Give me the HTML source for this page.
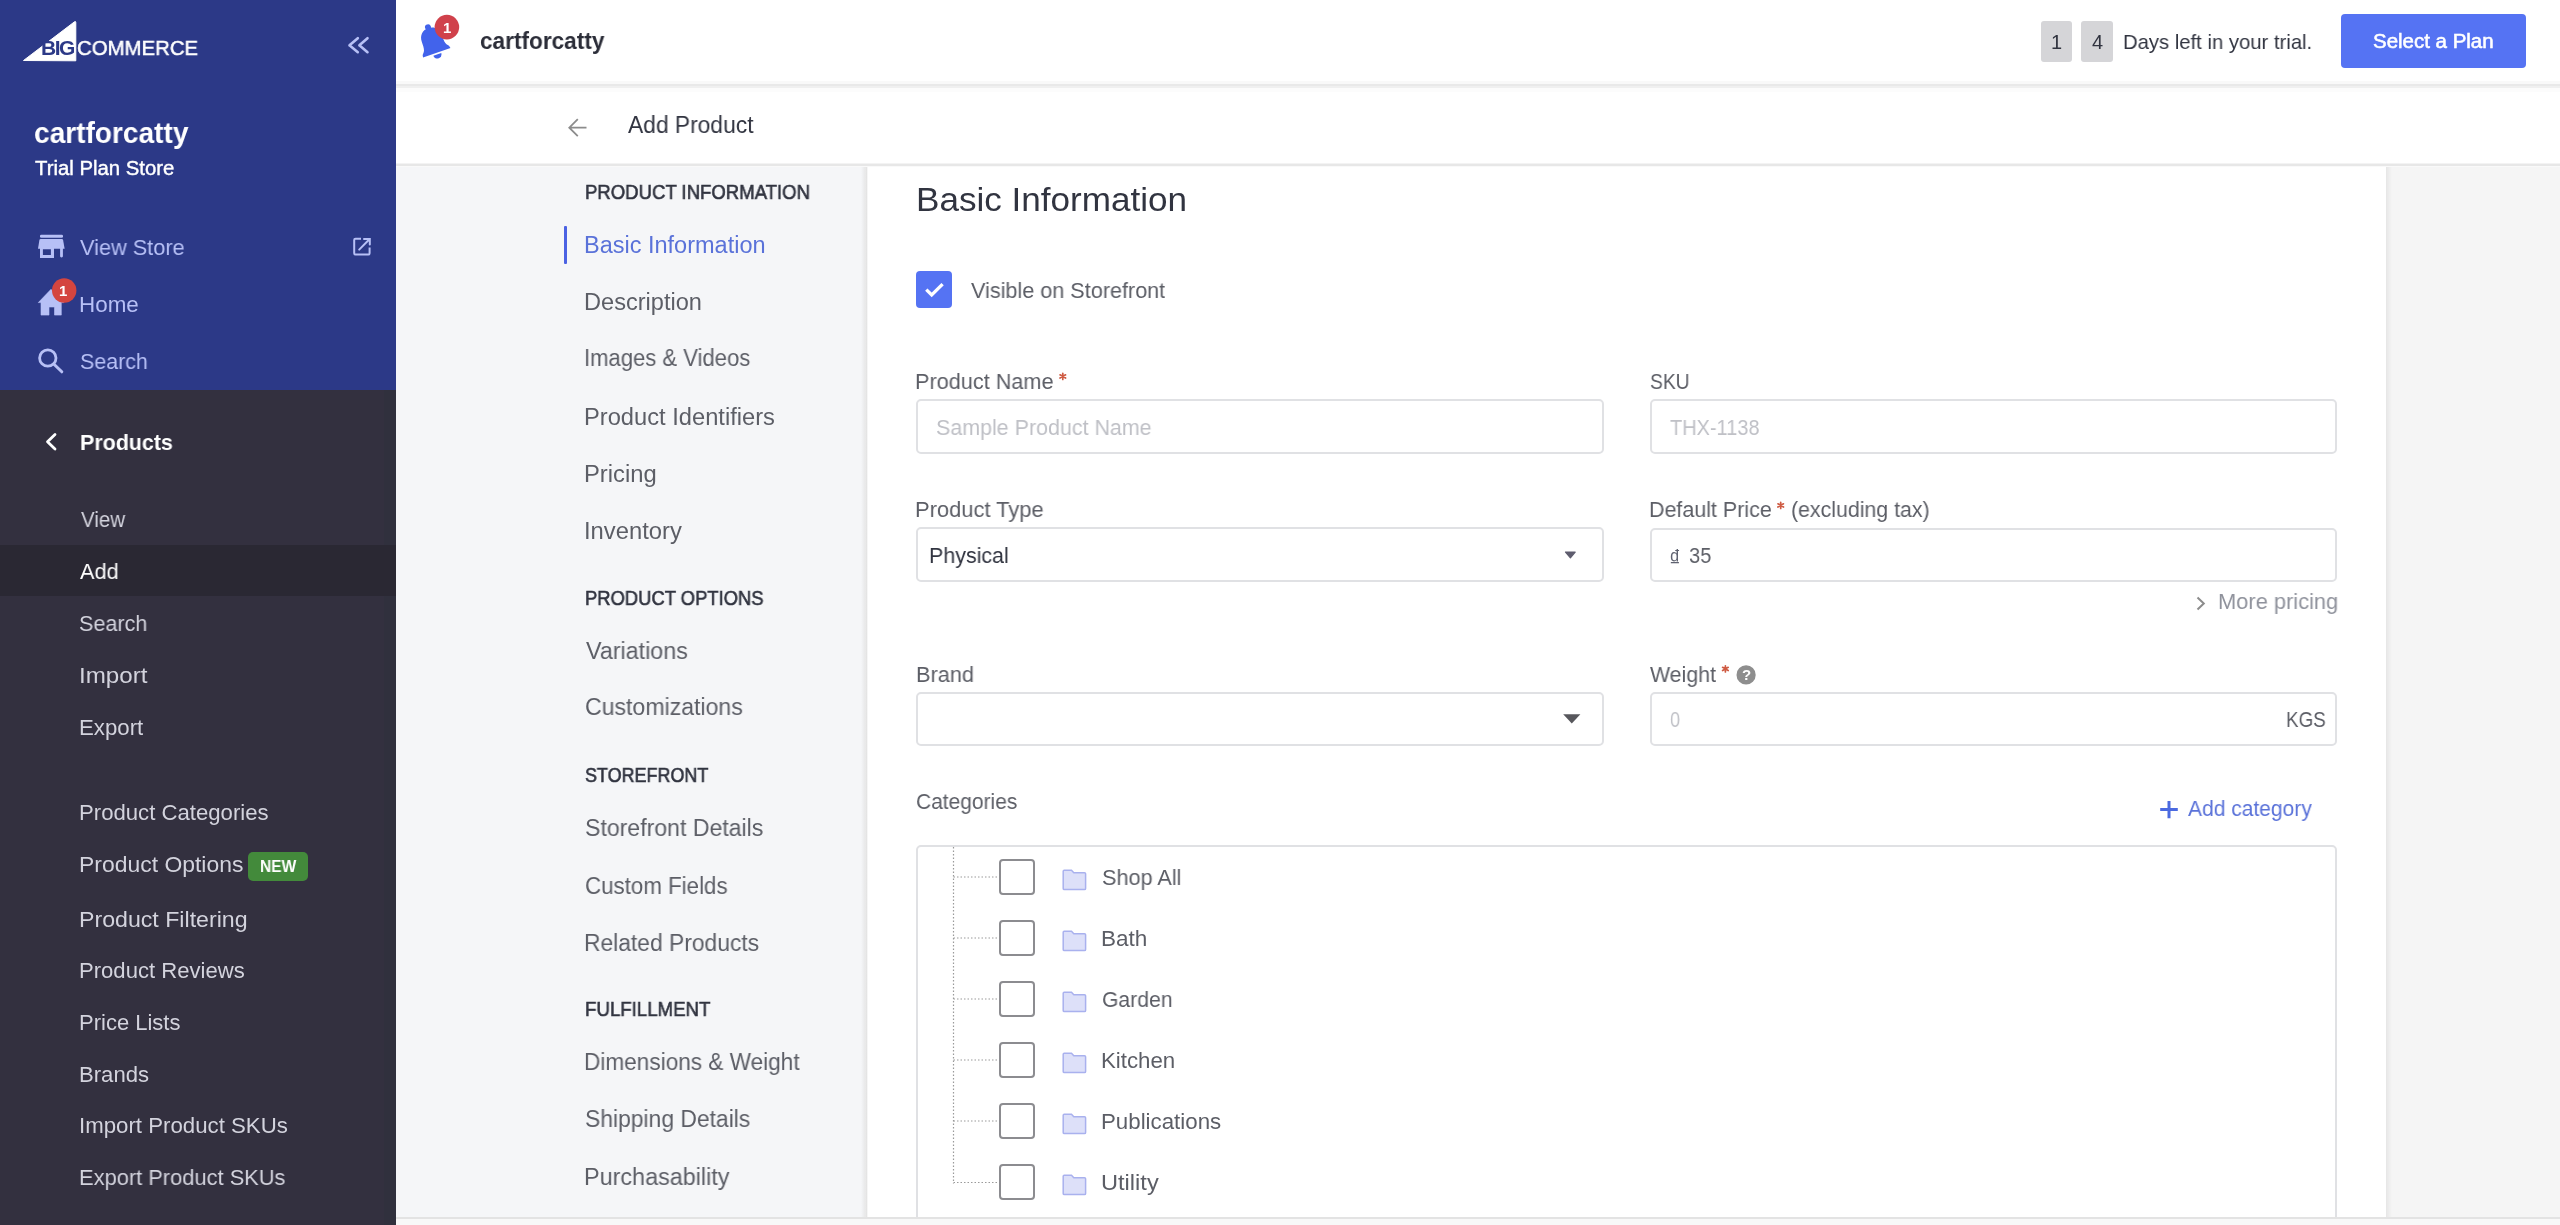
<!DOCTYPE html>
<html><head><meta charset="utf-8"><title>Add Product</title>
<style>
html,body{margin:0;padding:0}
body{width:2560px;height:1225px;overflow:hidden;position:relative;background:#ffffff;font-family:"Liberation Sans",sans-serif}
.a{position:absolute}
.t{position:absolute;white-space:nowrap;transform-origin:0 0;will-change:transform}
.inp{position:absolute;box-sizing:border-box;border:2px solid #e0e1e4;border-radius:5px;background:#fff}
.cb{position:absolute;box-sizing:border-box;width:36px;height:36px;border:2px solid #8c8c90;border-radius:4px;background:#fff}
svg{position:absolute;overflow:visible}
</style></head><body>
<!-- sidebar -->
<div class="a" style="left:0;top:0;width:396px;height:390px;background:#2c3987"></div>
<div class="a" style="left:0;top:390px;width:396px;height:835px;background:#33303f"></div>
<div class="a" style="left:384px;top:390px;width:12px;height:835px;background:#30303d"></div>
<div class="a" style="left:0;top:545px;width:396px;height:51px;background:#2a2833"></div>
<!-- logo -->
<svg style="left:0;top:0" width="396" height="80">
  <path d="M23.5 60.5 L74.5 21.8 Q75.8 21 75.8 22.5 L75.8 60.8 Z" fill="#ffffff" stroke="#ffffff" stroke-width="1" stroke-linejoin="round"/>
  <path d="M349.5 45.3 L357.8 38.2 M349.5 45.3 L357.8 52.2 M359.4 45.3 L367.5 38.2 M359.4 45.3 L367.5 52.2" stroke="#b7c0f6" stroke-width="2.6" stroke-linecap="round" fill="none"/>
</svg>
<!-- sidebar icons -->
<svg style="left:0;top:0" width="396" height="460">
  <!-- store -->
  <rect x="40" y="234.8" width="23" height="3" rx="1.3" fill="#b7c0f6"/>
  <path d="M41.6 239.1 L61.9 239.1 Q62.9 239.1 63.1 240.1 L64.6 248.7 L38 248.7 L39.4 240.1 Q39.6 239.1 40.6 239.1 Z" fill="#b7c0f6"/>
  <path d="M40 248 L54 248 L54 257.9 L40 257.9 Z M42.9 249.2 L42.9 254.9 L50.9 254.9 L50.9 249.2 Z" fill="#b7c0f6" fill-rule="evenodd"/>
  <path d="M60.1 248 L62.9 248 L62.9 256.6 Q61.5 258.6 60.1 256.6 Z" fill="#b7c0f6"/>
  <!-- external link -->
  <path d="M361 238.8 L355.5 238.8 Q354.2 238.8 354.2 240.1 L354.2 253.2 Q354.2 254.5 355.5 254.5 L368.3 254.5 Q369.6 254.5 369.6 253.2 L369.6 247.5" stroke="#b7c0f6" stroke-width="2" fill="none"/>
  <path d="M359.2 249.6 L369.4 239.2 M364 238.9 L369.8 238.9 L369.8 244.6" stroke="#b7c0f6" stroke-width="2" fill="none" stroke-linecap="round"/>
  <!-- home -->
  <path d="M51 289.3 L38.3 302.6 L41 302.6 L41 315.1 L49 315.1 L49 307 L54.5 307 L54.5 315.1 L61.3 315.1 L61.3 302.6 L63.8 302.6 Z" fill="#b7c0f6" stroke="#b7c0f6" stroke-width="0.6" stroke-linejoin="round"/>
  <circle cx="64.2" cy="290.5" r="12.2" fill="#d4453f"/>
  <!-- search -->
  <circle cx="47.8" cy="358" r="8.2" stroke="#b7c0f6" stroke-width="2.8" fill="none"/>
  <path d="M54 364.2 L61.8 371.8" stroke="#b7c0f6" stroke-width="3" stroke-linecap="round"/>
  <!-- products chevron -->
  <path d="M55 434.5 L47.5 441.8 L55 449" stroke="#ffffff" stroke-width="2.8" fill="none" stroke-linecap="round" stroke-linejoin="round"/>
</svg>
<div class="t" style="left:59.2px;top:281px;font-size:15px;line-height:20px;font-weight:bold;color:#fff">1</div>
<!-- NEW badge -->
<div class="a" style="left:248px;top:852px;width:60px;height:29px;background:#438a3b;border-radius:5px"></div>

<!-- header -->
<div class="a" style="left:396px;top:0;width:2164px;height:85px;background:#fff"></div>
<div class="a" style="left:396px;top:81px;width:2164px;height:3px;background:#f9f9f9"></div>
<div class="a" style="left:396px;top:84px;width:2164px;height:2px;background:#e9e9e9"></div>
<div class="a" style="left:396px;top:86px;width:2164px;height:2px;background:#f0f0f0"></div>
<div class="a" style="left:396px;top:88px;width:2164px;height:4px;background:#fcfcfc"></div>
<svg style="left:0;top:0" width="600" height="80">
  <g transform="translate(436.6 52.3) rotate(-19)">
    <path d="M-14.5 0.5 Q-14.5 -2.5 -12 -4.5 C-10.8 -6 -10.6 -9 -10.6 -12 L-10.6 -14.5 C-10.6 -21.5 -6 -25.6 0 -25.6 C6 -25.6 10.6 -21.5 10.6 -14.5 L10.6 -12 C10.6 -9 10.8 -6 12 -4.5 Q14.5 -2.5 14.5 0.5 Z" fill="#4263eb"/>
    <circle cx="0" cy="-26.5" r="3" fill="#4263eb"/>
    <path d="M-4.2 2.2 A4.2 4.2 0 0 0 4.2 2.2 Z" fill="#4263eb"/>
  </g>
  <circle cx="446.9" cy="27.1" r="12.3" fill="#d0414b"/>
</svg>
<div class="t" style="left:442.6px;top:17.5px;font-size:15px;line-height:20px;font-weight:bold;color:#fff">1</div>
<div class="a" style="left:2040.5px;top:21px;width:31px;height:40.5px;background:#d5d5d8;border-radius:3px"></div>
<div class="a" style="left:2081px;top:21px;width:31.5px;height:40.5px;background:#d5d5d8;border-radius:3px"></div>
<div class="a" style="left:2341px;top:14px;width:185px;height:54px;background:#5573f3;border-radius:4px"></div>

<!-- page header -->
<div class="a" style="left:396px;top:92px;width:2164px;height:72px;background:#fff"></div>
<div class="a" style="left:396px;top:163px;width:2164px;height:1px;background:#f3f3f3"></div>
<div class="a" style="left:396px;top:164px;width:2164px;height:2px;background:#e7e7e7"></div>
<div class="a" style="left:396px;top:166px;width:2164px;height:1px;background:#f9f9f9"></div>
<svg style="left:0;top:0" width="600" height="160">
  <path d="M586.5 127.7 L569.5 127.7 M577.8 119.2 L569.3 127.7 L577.8 136.2" stroke="#8c8c8c" stroke-width="1.8" fill="none"/>
</svg>

<!-- left nav column -->
<div class="a" style="left:396px;top:167px;width:469px;height:1051px;background:#f5f6f8"></div>
<div class="a" style="left:861px;top:167px;width:6px;height:1051px;background:linear-gradient(90deg,rgba(226,226,226,0),#e2e2e2)"></div>
<div class="a" style="left:867px;top:167px;width:1px;height:1051px;background:#f6f6f6"></div>
<div class="a" style="left:564px;top:225.5px;width:3px;height:38.5px;background:#4b62e3;border-radius:1px"></div>

<!-- right column -->
<div class="a" style="left:2386px;top:167px;width:174px;height:1051px;background:#f5f5f5"></div>
<div class="a" style="left:2386px;top:167px;width:6px;height:1051px;background:linear-gradient(90deg,#e6e6e6,#f5f5f5)"></div>
<!-- bottom bar -->
<div class="a" style="left:396px;top:1217px;width:2164px;height:8px;background:#f8f8f8"></div>
<div class="a" style="left:396px;top:1217px;width:2164px;height:2px;background:#e3e3e3"></div>

<!-- main form -->
<div class="a" style="left:916px;top:271px;width:36px;height:37px;background:#5573f3;border-radius:4px"></div>
<svg style="left:0;top:0" width="1000" height="320">
  <path d="M926.3 289.6 L931.7 295 L942.6 284.1" stroke="#ffffff" stroke-width="3.3" fill="none" stroke-linecap="butt" stroke-linejoin="miter"/>
</svg>
<div class="inp" style="left:916px;top:399px;width:688px;height:55px"></div>
<div class="inp" style="left:1650px;top:399px;width:687px;height:55px"></div>
<div class="inp" style="left:916px;top:527px;width:688px;height:55px"></div>
<div class="inp" style="left:1650px;top:527.5px;width:687px;height:54.5px"></div>
<div class="inp" style="left:916px;top:692px;width:688px;height:54px"></div>
<div class="inp" style="left:1650px;top:692px;width:687px;height:54px"></div>
<div class="inp" style="left:916px;top:845px;width:1421px;height:420px"></div>
<svg style="left:0;top:0" width="2560" height="1225">
  <!-- asterisks -->
  <g stroke="#cf5b43" stroke-width="1.7" stroke-linecap="round">
    <path d="M1062.8 373.3 L1062.8 379.5 M1060 374.8 L1065.6 378 M1065.6 374.8 L1060 378"/>
    <path d="M1780.7 502.3 L1780.7 508.5 M1777.9 503.8 L1783.5 507 M1783.5 503.8 L1777.9 507"/>
    <path d="M1725.4 665.8 L1725.4 672 M1722.6 667.3 L1728.2 670.5 M1728.2 667.3 L1722.6 670.5"/>
  </g>
  <!-- select arrows -->
  <path d="M1565.5 552 L1575.2 552 L1570.4 557.8 Z" fill="#5e5d6e" stroke="#5e5d6e" stroke-width="1.2" stroke-linejoin="round"/>
  <path d="M1563.2 714.3 L1580.4 714.3 L1571.8 723.4 Z" fill="#57575c"/>
  <!-- more pricing chevron -->
  <path d="M2197.5 597.5 L2203.8 603.5 L2197.5 609.5" stroke="#8c8c8c" stroke-width="2" fill="none"/>
  <!-- help -->
  <circle cx="1746.1" cy="674.9" r="9.6" fill="#8e8e8e"/>
  <!-- plus -->
  <path d="M2169 801 L2169 818.2 M2160.2 809.6 L2177.8 809.6" stroke="#4b6ae0" stroke-width="3"/>
  <!-- tree dotted lines -->
  <g stroke="#9a9a9a" stroke-width="1.2" stroke-dasharray="1.5 2">
    <path d="M953.5 847 L953.5 1183.5"/>
    <path d="M953.5 877 L997 877"/>
    <path d="M953.5 938 L997 938"/>
    <path d="M953.5 999 L997 999"/>
    <path d="M953.5 1060 L997 1060"/>
    <path d="M953.5 1121 L997 1121"/>
    <path d="M953.5 1182.5 L997 1182.5"/>
  </g>
  <!-- folders -->
  <defs>
    <g id="fold">
      <path d="M1.2 1 Q1.2 0 2.2 0 L9.5 0 L11.8 2.5 L22.5 2.5 Q23.6 2.5 23.6 3.6 L23.6 18.3 Q23.6 19.4 22.5 19.4 L2.3 19.4 Q1.2 19.4 1.2 18.3 Z" fill="#dde0f9" stroke="#a9b1ee" stroke-width="1.5"/>
    </g>
  </defs>
  <use href="#fold" x="1062" y="870.2"/>
  <use href="#fold" x="1062" y="931.2"/>
  <use href="#fold" x="1062" y="992.2"/>
  <use href="#fold" x="1062" y="1053.2"/>
  <use href="#fold" x="1062" y="1114.2"/>
  <use href="#fold" x="1062" y="1175.2"/>
</svg>
<div class="cb" style="left:998.5px;top:858.8px"></div>
<div class="cb" style="left:998.5px;top:919.8px"></div>
<div class="cb" style="left:998.5px;top:980.8px"></div>
<div class="cb" style="left:998.5px;top:1041.8px"></div>
<div class="cb" style="left:998.5px;top:1102.8px"></div>
<div class="cb" style="left:998.5px;top:1163.8px"></div>
<!-- bottom bar over tree -->
<div class="a" style="left:396px;top:1217px;width:2164px;height:8px;background:#f8f8f8"></div>
<div class="a" style="left:396px;top:1217px;width:2164px;height:2px;background:#e3e3e3"></div>

<div class="t" style="left:1741.6px;top:665px;font-size:15px;line-height:20px;font-weight:bold;color:#fff">?</div>
<div class="t" id="dong" style="left:1669px;top:547.5px;font-size:23px;line-height:22px;color:#5f6270">&#8363;</div>
<div class="t" style="left:41px;top:37px;font-size:21px;line-height:21px;font-weight:bold;color:#2c3987;letter-spacing:-1.5px">BIG</div>
<div class="t" style="left:76.5px;top:37px;font-size:21px;line-height:21px;color:#fff;transform:scaleX(0.97);-webkit-text-stroke:0.5px #fff">COMMERCE</div>
<div class="t" id="sb_store" style="left:34.20px;top:118.50px;font-size:29px;line-height:29px;font-weight:bold;color:#ffffff;transform:scaleX(0.9680);">cartforcatty</div>
<div class="t" id="sb_plan" style="left:34.98px;top:157.50px;font-size:20px;line-height:20px;font-weight:normal;color:#ffffff;transform:scaleX(1.0170);-webkit-text-stroke:0.4px #fff;">Trial Plan Store</div>
<div class="t" id="sb_viewstore" style="left:80.06px;top:236.81px;font-size:22px;line-height:22px;font-weight:normal;color:#b7c0f6;transform:scaleX(0.9868);">View Store</div>
<div class="t" id="sb_home" style="left:78.84px;top:294.01px;font-size:22px;line-height:22px;font-weight:normal;color:#b7c0f6;transform:scaleX(1.0179);">Home</div>
<div class="t" id="sb_search" style="left:79.88px;top:351.01px;font-size:22px;line-height:22px;font-weight:normal;color:#b7c0f6;transform:scaleX(0.9722);">Search</div>
<div class="t" id="sb_products" style="left:79.67px;top:431.81px;font-size:22px;line-height:22px;font-weight:bold;color:#ffffff;transform:scaleX(0.9747);">Products</div>
<div class="t" id="sb_view" style="left:80.63px;top:509.01px;font-size:22px;line-height:22px;font-weight:normal;color:#d3d3dd;transform:scaleX(0.9297);">View</div>
<div class="t" id="sb_add" style="left:79.84px;top:561.21px;font-size:22px;line-height:22px;font-weight:normal;color:#ffffff;transform:scaleX(0.9851);">Add</div>
<div class="t" id="sb_search2" style="left:79.08px;top:612.61px;font-size:22px;line-height:22px;font-weight:normal;color:#d3d3dd;transform:scaleX(0.9794);">Search</div>
<div class="t" id="sb_import" style="left:79.31px;top:664.81px;font-size:22px;line-height:22px;font-weight:normal;color:#d3d3dd;transform:scaleX(1.0986);">Import</div>
<div class="t" id="sb_export" style="left:79.03px;top:716.61px;font-size:22px;line-height:22px;font-weight:normal;color:#d3d3dd;transform:scaleX(1.0100);">Export</div>
<div class="t" id="sb_pcat" style="left:79.45px;top:802.01px;font-size:22px;line-height:22px;font-weight:normal;color:#d3d3dd;transform:scaleX(1.0070);">Product Categories</div>
<div class="t" id="sb_popt" style="left:79.39px;top:853.81px;font-size:22px;line-height:22px;font-weight:normal;color:#d3d3dd;transform:scaleX(1.0424);">Product Options</div>
<div class="t" id="sb_pfilt" style="left:79.38px;top:908.61px;font-size:22px;line-height:22px;font-weight:normal;color:#d3d3dd;transform:scaleX(1.0523);">Product Filtering</div>
<div class="t" id="sb_prev" style="left:79.45px;top:960.01px;font-size:22px;line-height:22px;font-weight:normal;color:#d3d3dd;transform:scaleX(1.0037);">Product Reviews</div>
<div class="t" id="sb_plists" style="left:79.46px;top:1011.81px;font-size:22px;line-height:22px;font-weight:normal;color:#d3d3dd;transform:scaleX(0.9971);">Price Lists</div>
<div class="t" id="sb_brands" style="left:79.45px;top:1064.21px;font-size:22px;line-height:22px;font-weight:normal;color:#d3d3dd;transform:scaleX(1.0049);">Brands</div>
<div class="t" id="sb_isku" style="left:79.44px;top:1115.01px;font-size:22px;line-height:22px;font-weight:normal;color:#d3d3dd;transform:scaleX(1.0108);">Import Product SKUs</div>
<div class="t" id="sb_esku" style="left:79.47px;top:1167.41px;font-size:22px;line-height:22px;font-weight:normal;color:#d3d3dd;transform:scaleX(0.9932);">Export Product SKUs</div>
<div class="t" id="sb_new" style="left:259.53px;top:858.88px;font-size:16px;line-height:16px;font-weight:bold;color:#ffffff;transform:scaleX(0.9698);">NEW</div>
<div class="t" id="hd_store" style="left:480.20px;top:29.32px;font-size:24px;line-height:24px;font-weight:bold;color:#2b2d38;transform:scaleX(0.9421);">cartforcatty</div>
<div class="t" id="hd_d1" style="left:2050.60px;top:32.10px;font-size:20px;line-height:20px;font-weight:normal;color:#313440;transform:scaleX(1.0000);">1</div>
<div class="t" id="hd_d2" style="left:2091.52px;top:32.10px;font-size:20px;line-height:20px;font-weight:normal;color:#313440;transform:scaleX(0.9654);">4</div>
<div class="t" id="hd_days" style="left:2122.57px;top:31.25px;font-size:21px;line-height:21px;font-weight:normal;color:#313440;transform:scaleX(0.9648);">Days left in your trial.</div>
<div class="t" id="hd_btn" style="left:2372.79px;top:30.50px;font-size:20px;line-height:20px;font-weight:normal;color:#ffffff;transform:scaleX(1.0235);-webkit-text-stroke:0.55px #fff;">Select a Plan</div>
<div class="t" id="pg_title" style="left:628.39px;top:113.76px;font-size:23px;line-height:23px;font-weight:normal;color:#313440;transform:scaleX(0.9913);">Add Product</div>
<div class="t" id="ln_h1" style="left:585.28px;top:181.50px;font-size:20px;line-height:20px;font-weight:normal;color:#313440;transform:scaleX(0.9273);-webkit-text-stroke:0.6px #313440;">PRODUCT INFORMATION</div>
<div class="t" id="ln_basic" style="left:584.33px;top:233.94px;font-size:23.5px;line-height:23.5px;font-weight:normal;color:#5a72d9;transform:scaleX(0.9995);">Basic Information</div>
<div class="t" id="ln_desc" style="left:584.33px;top:290.54px;font-size:23.5px;line-height:23.5px;font-weight:normal;color:#5c5e66;transform:scaleX(1.0032);">Description</div>
<div class="t" id="ln_img" style="left:584.46px;top:347.34px;font-size:23.5px;line-height:23.5px;font-weight:normal;color:#5c5e66;transform:scaleX(0.9383);">Images &amp; Videos</div>
<div class="t" id="ln_ident" style="left:584.31px;top:405.54px;font-size:23.5px;line-height:23.5px;font-weight:normal;color:#5c5e66;transform:scaleX(1.0082);">Product Identifiers</div>
<div class="t" id="ln_pricing" style="left:584.31px;top:462.94px;font-size:23.5px;line-height:23.5px;font-weight:normal;color:#5c5e66;transform:scaleX(1.0128);">Pricing</div>
<div class="t" id="ln_inv" style="left:584.31px;top:520.14px;font-size:23.5px;line-height:23.5px;font-weight:normal;color:#5c5e66;transform:scaleX(1.0119);">Inventory</div>
<div class="t" id="ln_h2" style="left:585.29px;top:588.10px;font-size:20px;line-height:20px;font-weight:normal;color:#313440;transform:scaleX(0.9197);-webkit-text-stroke:0.6px #313440;">PRODUCT OPTIONS</div>
<div class="t" id="ln_var" style="left:586.30px;top:639.54px;font-size:23.5px;line-height:23.5px;font-weight:normal;color:#5c5e66;transform:scaleX(0.9914);">Variations</div>
<div class="t" id="ln_cust" style="left:585.35px;top:695.94px;font-size:23.5px;line-height:23.5px;font-weight:normal;color:#5c5e66;transform:scaleX(0.9821);">Customizations</div>
<div class="t" id="ln_h3" style="left:585.30px;top:764.90px;font-size:20px;line-height:20px;font-weight:normal;color:#313440;transform:scaleX(0.8971);-webkit-text-stroke:0.6px #313440;">STOREFRONT</div>
<div class="t" id="ln_sfd" style="left:585.35px;top:816.94px;font-size:23.5px;line-height:23.5px;font-weight:normal;color:#5c5e66;transform:scaleX(0.9825);">Storefront Details</div>
<div class="t" id="ln_cf" style="left:585.38px;top:874.74px;font-size:23.5px;line-height:23.5px;font-weight:normal;color:#5c5e66;transform:scaleX(0.9493);">Custom Fields</div>
<div class="t" id="ln_rp" style="left:584.39px;top:931.94px;font-size:23.5px;line-height:23.5px;font-weight:normal;color:#5c5e66;transform:scaleX(0.9714);">Related Products</div>
<div class="t" id="ln_h4" style="left:585.29px;top:998.90px;font-size:20px;line-height:20px;font-weight:normal;color:#313440;transform:scaleX(0.9327);-webkit-text-stroke:0.6px #313440;">FULFILLMENT</div>
<div class="t" id="ln_dim" style="left:584.41px;top:1051.14px;font-size:23.5px;line-height:23.5px;font-weight:normal;color:#5c5e66;transform:scaleX(0.9616);">Dimensions &amp; Weight</div>
<div class="t" id="ln_ship" style="left:585.36px;top:1107.94px;font-size:23.5px;line-height:23.5px;font-weight:normal;color:#5c5e66;transform:scaleX(0.9732);">Shipping Details</div>
<div class="t" id="ln_purch" style="left:584.34px;top:1165.74px;font-size:23.5px;line-height:23.5px;font-weight:normal;color:#5c5e66;transform:scaleX(0.9947);">Purchasability</div>
<div class="t" id="mn_title" style="left:915.53px;top:182.27px;font-size:34px;line-height:34px;font-weight:normal;color:#313440;transform:scaleX(1.0322);">Basic Information</div>
<div class="t" id="mn_vis" style="left:970.67px;top:280.41px;font-size:22px;line-height:22px;font-weight:normal;color:#5c5e66;transform:scaleX(0.9823);">Visible on Storefront</div>
<div class="t" id="mn_pn" style="left:915.08px;top:371.01px;font-size:22px;line-height:22px;font-weight:normal;color:#5c5e66;transform:scaleX(0.9850);">Product Name</div>
<div class="t" id="mn_pn_ph" style="left:935.88px;top:417.41px;font-size:22px;line-height:22px;font-weight:normal;color:#bfc0c6;transform:scaleX(0.9741);">Sample Product Name</div>
<div class="t" id="mn_sku" style="left:1649.77px;top:371.41px;font-size:22px;line-height:22px;font-weight:normal;color:#5c5e66;transform:scaleX(0.8752);">SKU</div>
<div class="t" id="mn_sku_ph" style="left:1669.89px;top:416.81px;font-size:22px;line-height:22px;font-weight:normal;color:#bfc0c6;transform:scaleX(0.9073);">THX-1138</div>
<div class="t" id="mn_pt" style="left:914.86px;top:499.21px;font-size:22px;line-height:22px;font-weight:normal;color:#5c5e66;transform:scaleX(0.9954);">Product Type</div>
<div class="t" id="mn_phys" style="left:929.49px;top:544.81px;font-size:22px;line-height:22px;font-weight:normal;color:#313440;transform:scaleX(0.9735);">Physical</div>
<div class="t" id="mn_dp" style="left:1649.11px;top:499.41px;font-size:22px;line-height:22px;font-weight:normal;color:#5c5e66;transform:scaleX(0.9748);">Default Price</div>
<div class="t" id="mn_dp2" style="left:1791.09px;top:499.41px;font-size:22px;line-height:22px;font-weight:normal;color:#5c5e66;transform:scaleX(0.9689);">(excluding tax)</div>
<div class="t" id="mn_35" style="left:1689.36px;top:544.81px;font-size:22px;line-height:22px;font-weight:normal;color:#5c5e66;transform:scaleX(0.9164);">35</div>
<div class="t" id="mn_more" style="left:2218.47px;top:590.81px;font-size:22px;line-height:22px;font-weight:normal;color:#8f929c;transform:scaleX(0.9933);">More pricing</div>
<div class="t" id="mn_brand" style="left:915.67px;top:664.21px;font-size:22px;line-height:22px;font-weight:normal;color:#5c5e66;transform:scaleX(0.9876);">Brand</div>
<div class="t" id="mn_weight" style="left:1650.05px;top:663.81px;font-size:22px;line-height:22px;font-weight:normal;color:#5c5e66;transform:scaleX(0.9692);">Weight</div>
<div class="t" id="mn_w0" style="left:1669.61px;top:709.01px;font-size:22px;line-height:22px;font-weight:normal;color:#bfc0c6;transform:scaleX(0.8315);">0</div>
<div class="t" id="mn_kgs" style="left:2285.65px;top:709.21px;font-size:22px;line-height:22px;font-weight:normal;color:#5c5e66;transform:scaleX(0.8557);">KGS</div>
<div class="t" id="mn_cat" style="left:916.09px;top:791.21px;font-size:22px;line-height:22px;font-weight:normal;color:#5c5e66;transform:scaleX(0.9515);">Categories</div>
<div class="t" id="mn_addcat" style="left:2187.67px;top:797.81px;font-size:22px;line-height:22px;font-weight:normal;color:#5a72d9;transform:scaleX(0.9551);">Add category</div>
<div class="t" id="mn_c1" style="left:1102.07px;top:866.81px;font-size:22px;line-height:22px;font-weight:normal;color:#5c5e66;transform:scaleX(0.9835);">Shop All</div>
<div class="t" id="mn_c2" style="left:1101.01px;top:927.81px;font-size:22px;line-height:22px;font-weight:normal;color:#5c5e66;transform:scaleX(1.0238);">Bath</div>
<div class="t" id="mn_c3" style="left:1101.91px;top:989.41px;font-size:22px;line-height:22px;font-weight:normal;color:#5c5e66;transform:scaleX(0.9607);">Garden</div>
<div class="t" id="mn_c4" style="left:1101.44px;top:1050.41px;font-size:22px;line-height:22px;font-weight:normal;color:#5c5e66;transform:scaleX(1.0116);">Kitchen</div>
<div class="t" id="mn_c5" style="left:1101.44px;top:1110.81px;font-size:22px;line-height:22px;font-weight:normal;color:#5c5e66;transform:scaleX(1.0130);">Publications</div>
<div class="t" id="mn_c6" style="left:1101.31px;top:1171.61px;font-size:22px;line-height:22px;font-weight:normal;color:#5c5e66;transform:scaleX(1.0734);">Utility</div>
</body></html>
